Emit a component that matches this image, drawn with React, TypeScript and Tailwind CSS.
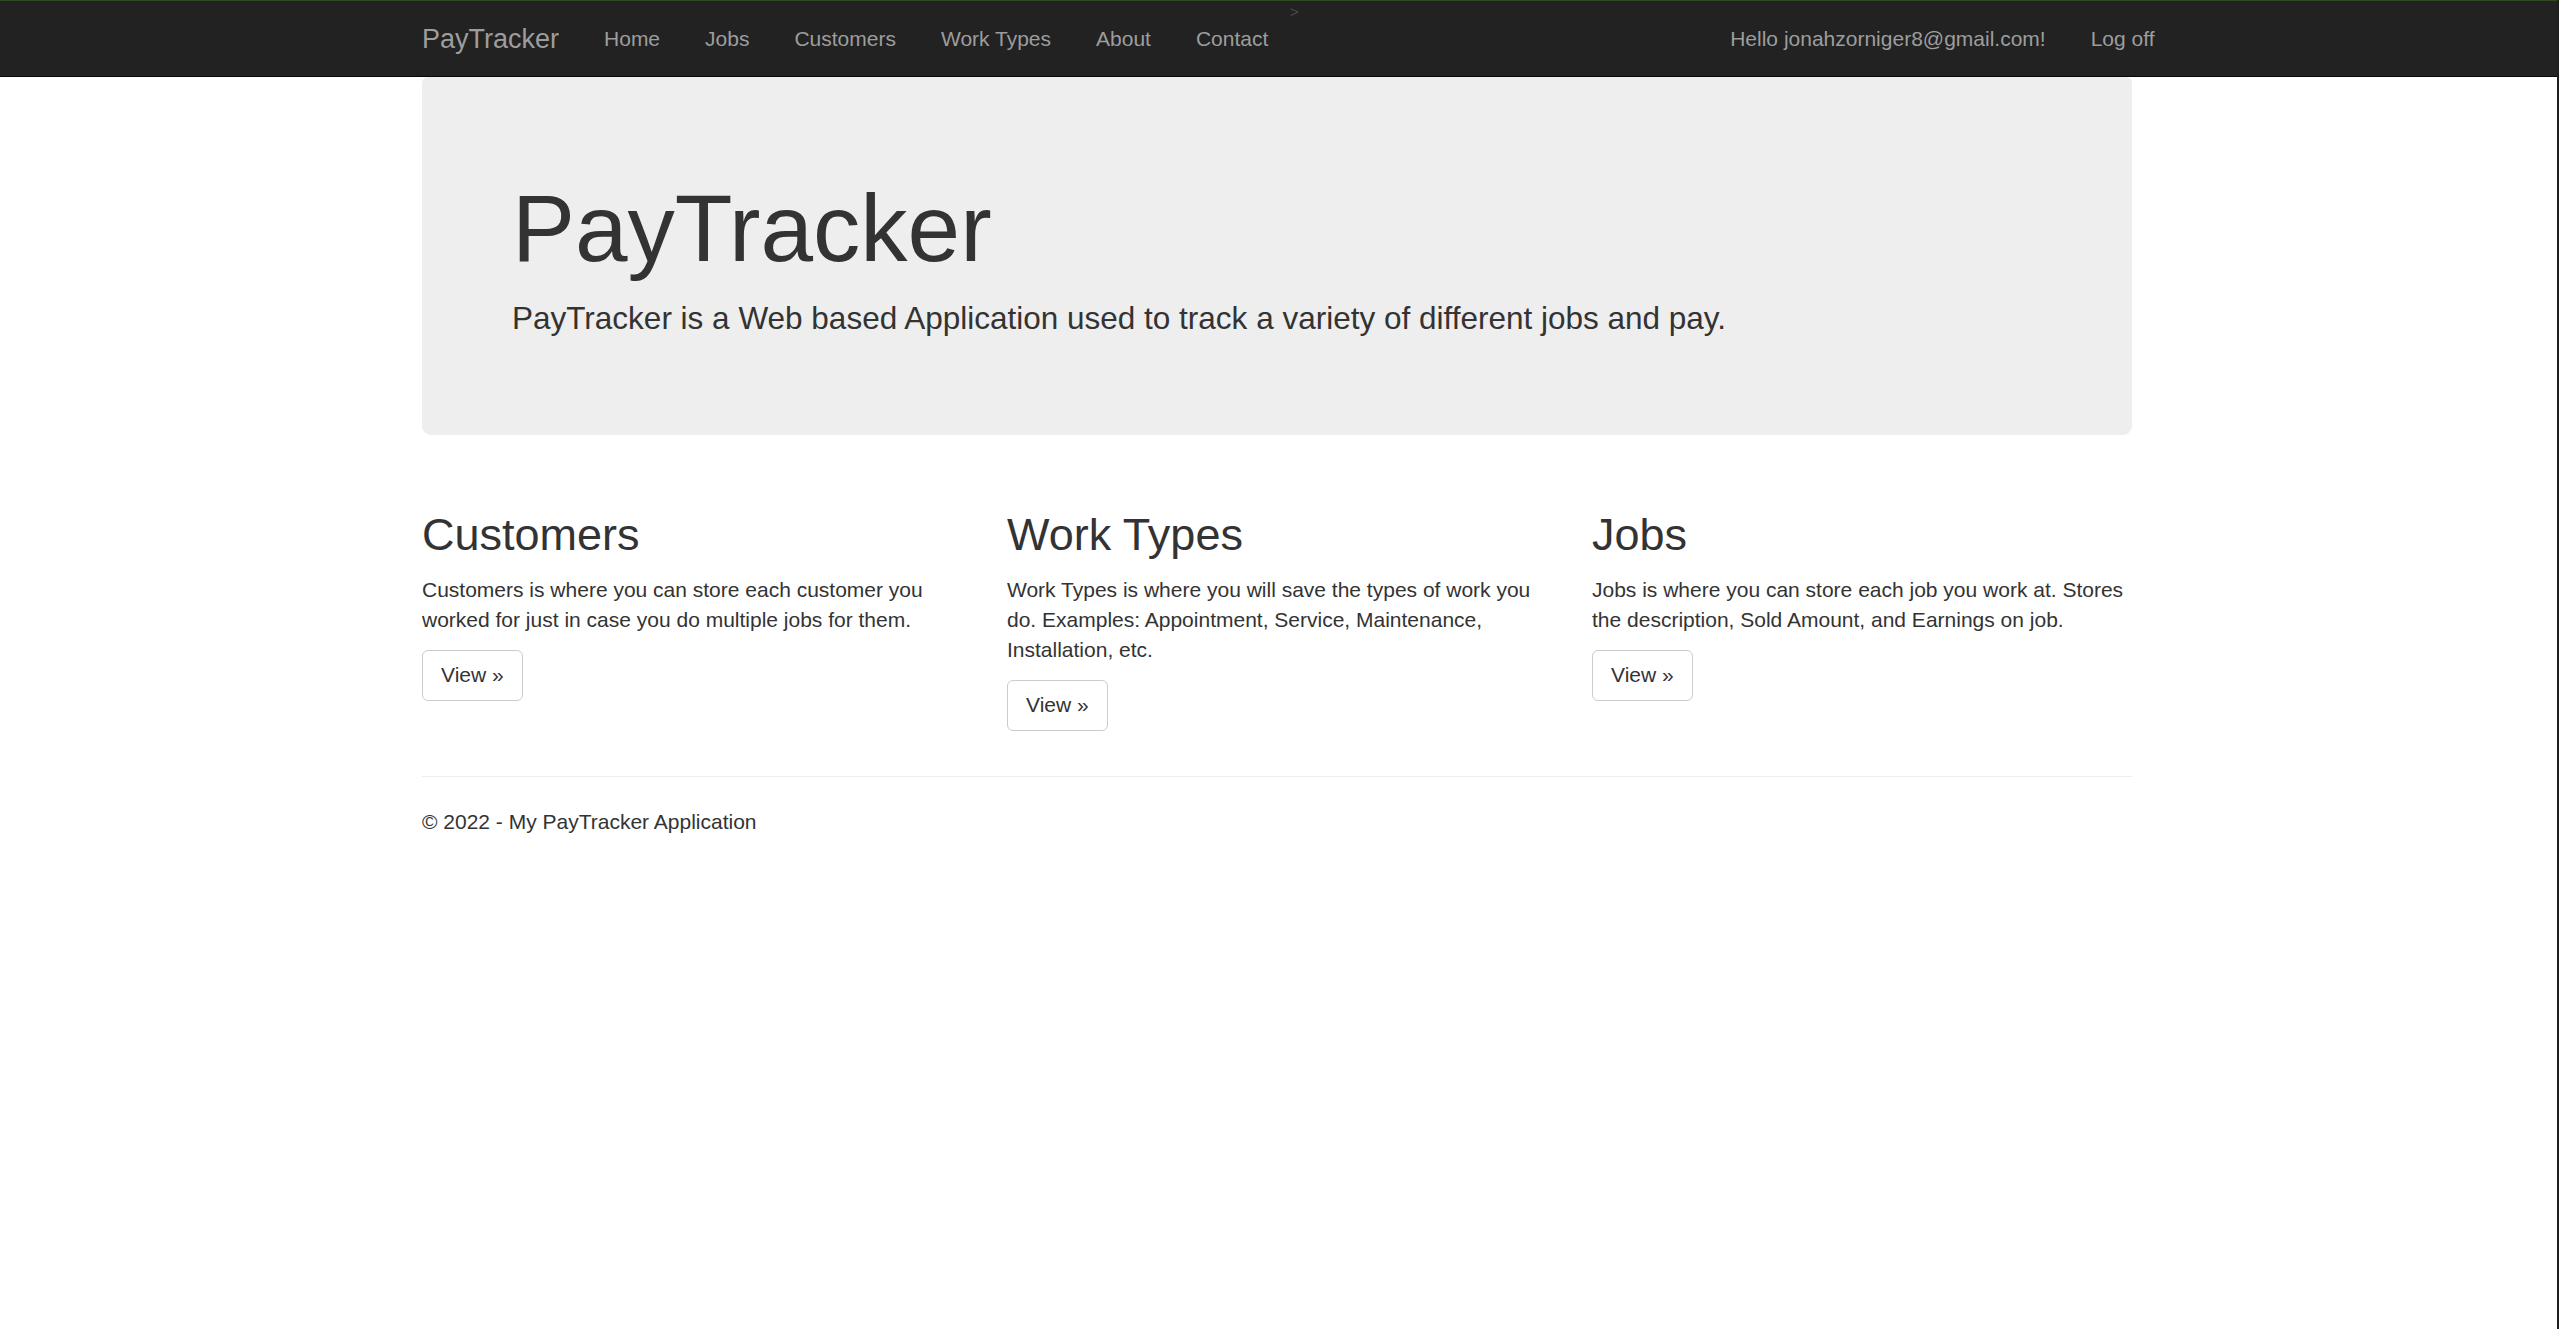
const navLinks = ['Home', 'Jobs', 'Customers', 'Work Types', 'About', 'Contact']

const sections = [
  {
    title: 'Customers',
    text: 'Customers is where you can store each customer you worked for just in case you do multiple jobs for them.',
  },
  {
    title: 'Work Types',
    text: 'Work Types is where you will save the types of work you do. Examples: Appointment, Service, Maintenance, Installation, etc.',
  },
  {
    title: 'Jobs',
    text: 'Jobs is where you can store each job you work at. Stores the description, Sold Amount, and Earnings on job.',
  },
]

function Navbar() {
  return (
    <nav className="relative h-[77px] bg-[#222] border-t border-t-[#2d4a20] border-b border-b-[#080808] pr-[3px]">
      <div className="mx-auto flex h-full w-[1755px] items-center px-[22.5px]">
        <a href="#" className="-ml-[22.5px] px-[22.5px] text-[27px] leading-[30px] text-[#9d9d9d]">
          PayTracker
        </a>
        <ul className="flex">
          {navLinks.map((l) => (
            <li key={l}>
              <a href="#" className="block px-[22.5px] text-[21px] leading-[30px] text-[#9d9d9d]">
                {l}
              </a>
            </li>
          ))}
        </ul>
        <ul className="-mr-[45px] ml-auto flex">
          <li>
            <a href="#" className="block px-[22.5px] text-[21px] leading-[30px] text-[#9d9d9d]">
              Hello jonahzorniger8@gmail.com!
            </a>
          </li>
          <li>
            <a href="#" className="block px-[22.5px] text-[21px] leading-[30px] text-[#9d9d9d]">
              Log off
            </a>
          </li>
        </ul>
      </div>
      {/* stray caret left over in the bar */}
      <span className="absolute left-[1290px] top-[3px] text-[15px] leading-none text-[#4a4a4a]">&gt;</span>
    </nav>
  )
}

export default function App() {
  return (
    <div
      className="flex min-h-screen bg-white text-[21px] leading-[30px] text-[#333]"
      style={{ fontFamily: '"Liberation Sans", Arial, sans-serif' }}
    >
      <div className="flex-1">
        <Navbar />
        <div className="pr-[3px]">
          <div className="mx-auto w-[1755px] px-[22.5px]">
            <div className="mb-[45px] rounded-b-[9px] rounded-t-[6px] bg-[#eee] px-[90px] pb-[72px] pt-[70px]">
              <h1 className="mb-[15px] mt-[30px] text-[94.5px] font-normal leading-[1.1]">PayTracker</h1>
              <p className="mb-[22.5px] text-[31.5px] leading-[45px]">
                PayTracker is a Web based Application used to track a variety of different jobs and pay.
              </p>
            </div>

            <div className="-mx-[22.5px] grid grid-cols-3">
              {sections.map((s) => (
                <div key={s.title} className="px-[22.5px]">
                  <h2 className="mb-[15px] mt-[30px] text-[45px] font-normal leading-[1.1]">{s.title}</h2>
                  <p className="mb-[15px]">{s.text}</p>
                  <p className="mb-[15px]">
                    <a
                      href="#"
                      className="inline-block rounded-[6px] border border-[#ccc] bg-white px-[18px] py-[9.5px] align-middle text-[21px] leading-[30px] text-[#333]"
                    >
                      View &raquo;
                    </a>
                  </p>
                </div>
              ))}
            </div>

            <hr className="my-[30px] border-0 border-t border-t-[#eee]" />
            <footer>
              <p className="mb-[15px]">&copy; 2022 - My PayTracker Application</p>
            </footer>
          </div>
        </div>
      </div>
      <div className="w-[2px] shrink-0 bg-[#1e1e1e]" />
    </div>
  )
}
